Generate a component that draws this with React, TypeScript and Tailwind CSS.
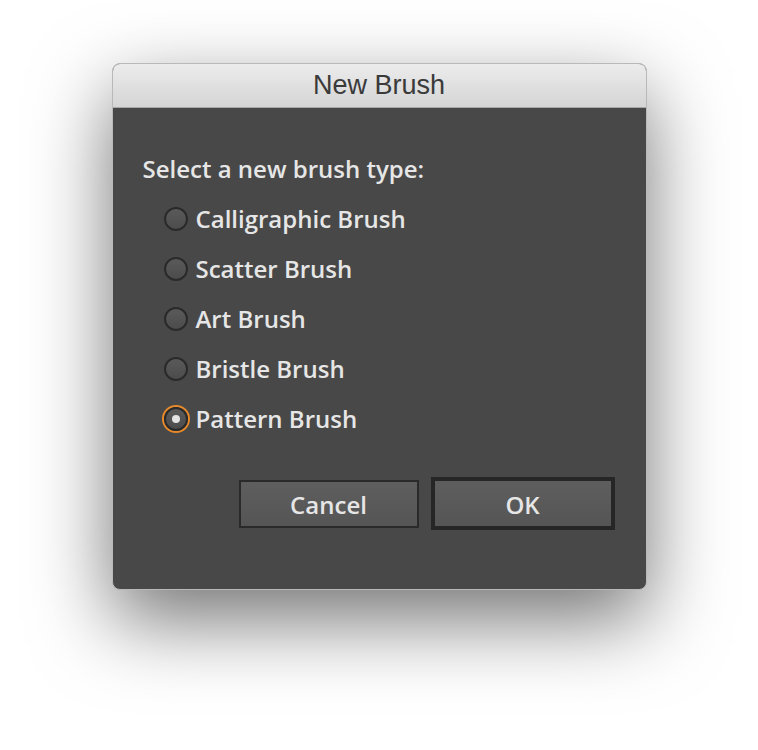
import { useState } from 'react';
import { clsx } from 'clsx';

const brushTypes = ['Calligraphic Brush', 'Scatter Brush', 'Art Brush', 'Bristle Brush', 'Pattern Brush'];

const Radio = ({ checked }: { checked: boolean }) => (
    <span
        className={clsx(
            'flex h-[28px] w-[28px] shrink-0 items-center justify-center rounded-full',
            checked ? 'border-2 border-[#e8892a]' : 'border-2 border-transparent'
        )}
    >
        <span className="flex h-[24px] w-[24px] items-center justify-center rounded-full border-2 border-[#2a2a2a] bg-gradient-to-b from-[#5a5a5a] to-[#4c4c4c]">
            {checked && <span className="h-[8px] w-[8px] rounded-full bg-[#e4e4e4]" />}
        </span>
    </span>
);

export default function App() {
    const [selected, setSelected] = useState('Pattern Brush');

    return (
        <div className="flex min-h-[750px] w-full justify-center bg-white pt-[63px]">
            <div className="flex h-[527px] w-[535px] flex-col overflow-hidden rounded-[8px] border border-[#b9b9b9] bg-[#484848] shadow-[0_30px_80px_rgba(0,0,0,0.55)]">
                <div className="flex h-[44px] shrink-0 items-center justify-center border-b border-[#a8a8a8] bg-gradient-to-b from-[#ececec] to-[#d5d5d5] font-['Helvetica_Neue','Liberation_Sans',Arial,sans-serif] text-[27px] text-[#3a3a3a]">
                    New Brush
                </div>

                <div className="flex flex-col pl-[30px] pr-[30px] pt-[46px] font-['Open_Sans',sans-serif] font-semibold text-[#e6e6e6]">
                    <div className="text-[24px] leading-[30px]">Select a new brush type:</div>

                    <div className="mt-[20px] flex flex-col gap-[20px] pl-[19px]">
                        {brushTypes.map((b) => (
                            <button
                                key={b}
                                onClick={() => setSelected(b)}
                                className="flex h-[30px] items-center gap-[6px] text-left text-[24px]"
                            >
                                <Radio checked={selected === b} />
                                <span>{b}</span>
                            </button>
                        ))}
                    </div>

                    <div className="mt-[43px] flex items-center justify-end gap-[12px] pr-[1px]">
                        <button className="h-[48px] w-[180px] border-2 border-[#2a2a2a] bg-gradient-to-b from-[#5e5e5e] to-[#555] pt-[2px] text-[24px] text-[#e6e6e6]">
                            Cancel
                        </button>
                        <button className="h-[53px] w-[184px] border-[4px] border-[#262626] bg-gradient-to-b from-[#5e5e5e] to-[#555] pt-[2px] text-[24px] text-[#e6e6e6]">
                            OK
                        </button>
                    </div>
                </div>
            </div>
        </div>
    );
}
